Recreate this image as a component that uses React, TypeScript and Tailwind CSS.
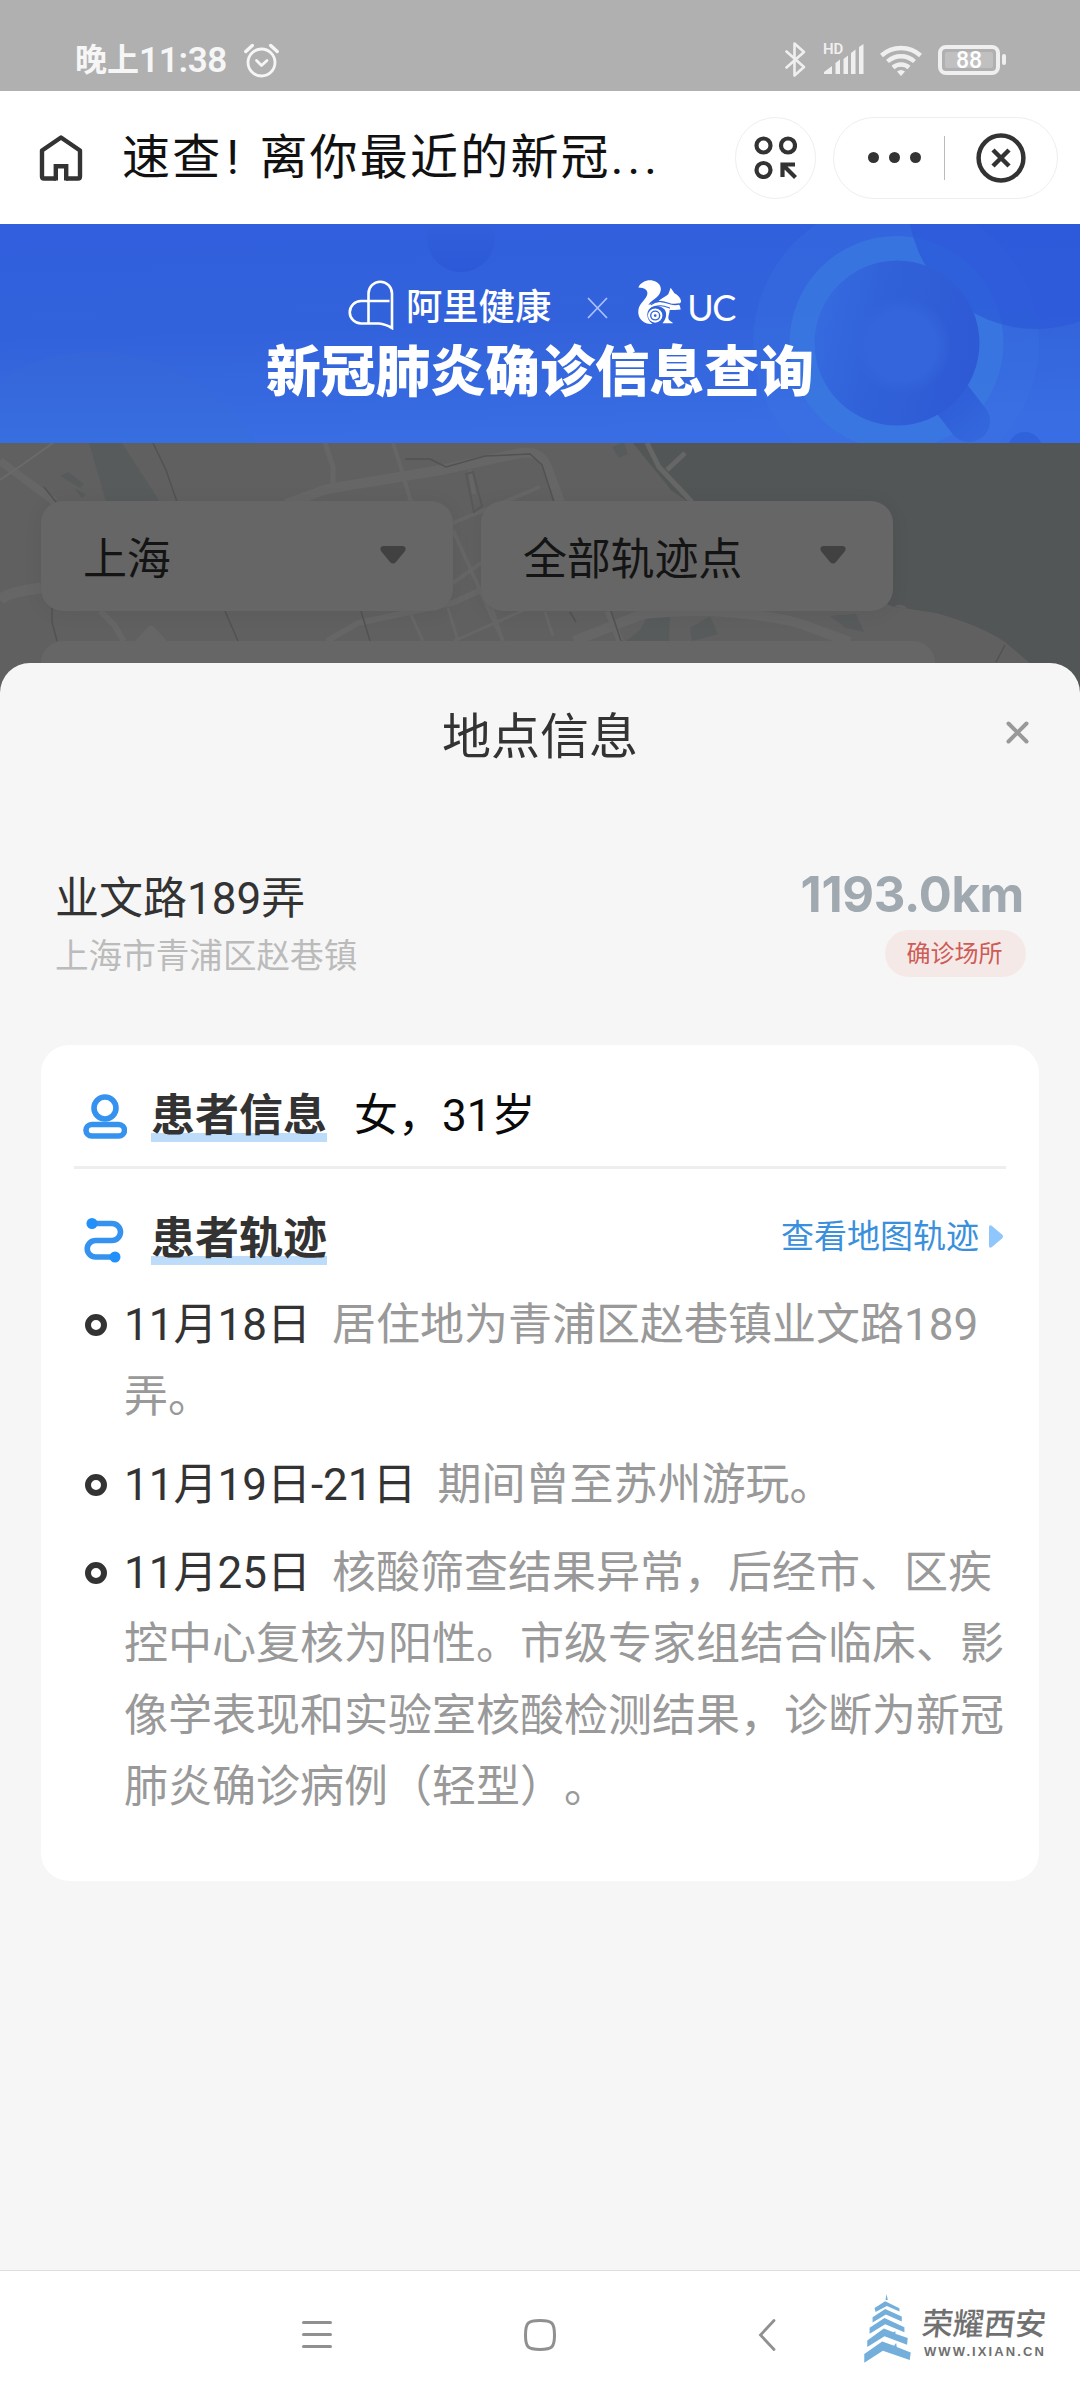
import React from "react";

interface TrackItem {
  date: string;
  detail: string;
}

const tracks: TrackItem[] = [
  { date: "11月18日", detail: "居住地为青浦区赵巷镇业文路189弄。" },
  { date: "11月19日-21日", detail: "期间曾至苏州游玩。" },
  {
    date: "11月25日",
    detail:
      "核酸筛查结果异常，后经市、区疾控中心复核为阳性。市级专家组结合临床、影像学表现和实验室核酸检测结果，诊断为新冠肺炎确诊病例（轻型）。",
  },
];

function StatusBar() {
  return (
    <header className="flex h-[91px] items-start justify-between bg-[#b0b0b0] pr-[80px] pl-[75px] pt-[42px] text-[#f6f6f6]">
      <div className="flex items-center">
        <span className="text-[32px] leading-[34px] font-bold whitespace-nowrap">晚上</span>
        <span className="w-[88px] pt-[2px] text-[35px] leading-[34px] font-semibold whitespace-nowrap tracking-[-0.300px]">11:38</span>
        <svg className="ml-[17px]" width="35" height="35" viewBox="0 0 35 35" fill="none" stroke="currentColor" strokeWidth="2.8" strokeLinecap="round" strokeLinejoin="round">
          <circle cx="17.5" cy="19.5" r="13.5" />
          <path d="M12.5 17.5l5 5 5.500-5" />
          <path d="M1.800 8.500l6.500-6M33.200 8.500l-6.500-6" strokeWidth="3.400" />
        </svg>
      </div>
      <div className="flex items-center text-[#efefef]">
        <svg width="21" height="35" viewBox="0 0 21 35" fill="none" stroke="currentColor" strokeWidth="2.6" strokeLinejoin="round" strokeLinecap="round">
          <path d="M1.500 9.500l17.500 15.500-9.500 8.500V1.500l9.500 8.500L1.500 25.500" />
        </svg>
        <div className="relative ml-[17px] h-[35px] w-[41px]">
          <span className="absolute top-0 left-0 text-[15px] leading-[14px] font-semibold">HD</span>
          <svg width="41" height="35" viewBox="0 0 41 35" fill="currentColor">
            <path d="M1 30l8-6v8H1zM12.500 21l4.500-3.500V32h-4.500zM20.500 17l4.500-3.500V32h-4.500zM28 11l4.500-3.500V32H28zM36 5l4.500-3V32H36z" />
          </svg>
        </div>
        <svg className="ml-[16px]" width="42" height="32" viewBox="0 0 42 32" fill="none" stroke="currentColor" strokeWidth="4.400">
          <path d="M1.500 11.500a29 29 0 0 1 39 0" />
          <path d="M7.500 17.500a20 20 0 0 1 27 0" />
          <path d="M13 23.500a12 12 0 0 1 16 0" />
          <path d="M17 27.500q4-3 8 0l-4 4.500z" fill="currentColor" stroke="none" />
        </svg>
        <div className="ml-[16px] flex h-[30px] w-[62px] items-center justify-center rounded-[8px] border-4 border-[#efefef] p-[3px]">
          <span className="h-full w-full rounded-[2px] bg-[#c0c0c0] text-center text-[23px] leading-[18px] font-medium text-white">88</span>
        </div>
        <span className="mr-[-6px] ml-[2px] h-[11px] w-[4px] rounded-sm bg-[#efefef]" />
      </div>
    </header>
  );
}

function TitleBar() {
  return (
    <div className="flex h-[133px] items-center bg-white pl-[39px] text-[#333]">
      <svg width="44" height="48" viewBox="0 0 44 48" fill="none" stroke="currentColor" strokeWidth="4.400" strokeLinejoin="round">
        <path d="M17 44.500H5Q3 44.500 3 42.500V16.500L22 3.500l19 13V42.500q0 2-2 2H27" />
        <path d="M16.800 46.500V32.200h10.400V46.500" strokeLinejoin="miter" />
      </svg>
      <h1 className="ml-[39px] flex w-[613px] text-[48px] leading-[60px] tracking-[2.200px] whitespace-nowrap text-[#111]">
        <span>速查</span>
        <span className="w-[37px] pl-[4px]">!</span>
        <span>离你最近的新冠</span>
        <span className="tracking-[4px]">...</span>
      </h1>
      <div className="flex h-[82px] w-[81px] items-center justify-center rounded-full border border-[#eee]">
        <svg width="43" height="43" viewBox="0 0 43 43" fill="none" stroke="currentColor" strokeWidth="4.200">
          <circle cx="9.500" cy="9.500" r="7" />
          <circle cx="34" cy="9.500" r="7" />
          <circle cx="9.500" cy="34" r="7" />
          <path d="M28.500 41V28.500H41M29 29l12.500 12.500" />
        </svg>
      </div>
      <div className="ml-[17px] flex h-[82px] w-[225px] items-center rounded-full border border-[#eee]">
        <div className="ml-[34px] flex gap-[10px]">
          <i className="h-[11px] w-[11px] rounded-full bg-[#333]" />
          <i className="h-[11px] w-[11px] rounded-full bg-[#333]" />
          <i className="h-[11px] w-[11px] rounded-full bg-[#333]" />
        </div>
        <span className="ml-[23px] h-[44px] w-px bg-[#bbb]" />
        <svg className="ml-[31px]" width="50" height="50" viewBox="0 0 50 50" fill="none" stroke="currentColor" strokeWidth="4.500">
          <circle cx="25" cy="25" r="22.400" />
          <path d="M17 17l16 16M33 17L17 33" />
        </svg>
      </div>
    </div>
  );
}

function BannerArt() {
  return (
    <svg className="absolute inset-0" width="1080" height="219" viewBox="0 224 1080 219">
      <defs>
        <linearGradient id="sea" x1="0" y1="0" x2="0.150" y2="1">
          <stop offset="0" stopColor="#315fde" />
          <stop offset="0.500" stopColor="#3262db" />
          <stop offset="1" stopColor="#386de3" />
        </linearGradient>
        <linearGradient id="lens" x1="0" y1="0.300" x2="1" y2="0.500">
          <stop offset="0" stopColor="#366be0" />
          <stop offset="0.350" stopColor="#3162d9" />
          <stop offset="1" stopColor="#2e5ad5" />
        </linearGradient>
        <radialGradient id="glass">
          <stop offset="0.700" stopColor="#3465dc" />
          <stop offset="1" stopColor="#3465dc" stopOpacity="0" />
        </radialGradient>
        <linearGradient id="hill" x1="0" y1="0" x2="0" y2="1">
          <stop offset="0" stopColor="#3565d9" />
          <stop offset="0.250" stopColor="#376fe0" />
        </linearGradient>
        <linearGradient id="drop" x1="0" y1="0" x2="0" y2="1">
          <stop offset="0" stopColor="#3463de" />
          <stop offset="1" stopColor="#2c59d7" />
        </linearGradient>
        <linearGradient id="handle" gradientUnits="userSpaceOnUse" x1="940" y1="385" x2="985" y2="440">
          <stop offset="0" stopColor="#2e5bd6" />
          <stop offset="1" stopColor="#3468de" />
        </linearGradient>
      </defs>
      <rect y="224" width="1080" height="219" fill="url(#sea)" />
      <circle cx="95" cy="542" r="190" fill="url(#hill)" />
      <circle cx="461" cy="238" r="34" fill="url(#drop)" />
      <circle cx="896" cy="343" r="143" fill="#3a78e2" opacity="0.250" />
      <circle cx="896.500" cy="343" r="107" fill="#3a78e0" opacity="0.800" />
      <circle cx="1036" cy="201" r="128" fill="#2c59d8" opacity="0.700" />
      <path d="M945 390l24 31" stroke="url(#handle)" strokeWidth="42" strokeLinecap="round" />
      <circle cx="897" cy="343" r="82.500" fill="url(#lens)" />
      <circle cx="902" cy="346" r="49" fill="url(#glass)" />
      <circle cx="1025" cy="449" r="17" fill="#3063db" />
    </svg>
  );
}

function SquirrelLogo() {
  return (
    <svg width="43" height="44" viewBox="285 181 125 130" preserveAspectRatio="none" fill="#fff">
      <path d="M286 203C293 187 312 179 329 183C350 188 357 206 347 223C339 236 321 243 315 255C345 240 362 246 380 250C392 253 400 252 406 250C396 240 382 237 366 237L350 239C357 232 366 230 373 223L380 204L391 220C403 226 411 236 410 247L402 251L407 258L409 268C397 269 386 270 377 270C377 281 371 290 374 297C377 303 384 304 387 309H356C367 297 370 281 363 269C352 255 329 254 319 266C307 279 311 299 327 311C307 312 288 301 286 280C284 256 299 247 308 233C317 218 313 204 286 203Z" />
      <path d="M345 242C365 228 392 232 408 250L385 252Z" />
      <path d="M322 254C345 238 362 246 380 252Q394 255 405 252" fill="none" stroke="#3262db" strokeWidth="3.500" />
      <path d="M325 264C345 252 360 258 378 264" fill="none" stroke="#3262db" strokeWidth="3.500" />
      <circle cx="335" cy="286" r="18" fill="none" stroke="#fff" strokeWidth="6" />
      <circle cx="335" cy="286" r="7.500" fill="none" stroke="#fff" strokeWidth="7" />
    </svg>
  );
}

function Banner() {
  return (
    <section className="relative h-[219px] overflow-hidden bg-[#3262db] text-white">
      <BannerArt />
      <div className="relative flex h-[110px] items-start pt-[56px] pl-[348px]">
        <svg width="46" height="50" viewBox="0 0 46 50" fill="none" stroke="#fff" strokeWidth="2.600">
          <path d="M20.500 43V13.500a11.750 11.750 0 0 1 23.500 0V48q-7-4-13-4.500H13A11.250 11.250 0 0 1 13 21H41.500" />
        </svg>
        <span className="mt-[9px] ml-[12px] text-[36.300px] leading-[38px] font-medium whitespace-nowrap">阿里健康</span>
        <svg className="mt-[17px] ml-[36px]" width="21" height="22" viewBox="0 0 21 22" stroke="#a9c0ff" strokeWidth="1.800">
          <path d="M1 1l19 20M20 1L1 21" />
        </svg>
        <div className="ml-[30px]">
          <SquirrelLogo />
        </div>
        <span className="mt-[8px] ml-[6px] [font-family:Lato,sans-serif] text-[36px] leading-[38px] tracking-[-1.500px]">UC</span>
      </div>
      <h2 className="relative pt-[3px] pl-[266px] text-[54.800px] leading-[70px] font-black whitespace-nowrap">新冠肺炎确诊信息查询</h2>
    </section>
  );
}

// Dimmed street map behind the filters
function MapBackdrop() {
  return (
    <svg className="absolute inset-0" width="1080" height="270" viewBox="0 443 1080 270" fill="none">
      <rect y="443" width="1080" height="270" fill="#606060" />
      <path d="M633 443L671 490L688 502L780 560L894 607L936 613Q980 625 1005 642L1038 670V713H1080V443Z" fill="#525656" />
      <path d="M894 607Q900 600 912 612L936 613" fill="#606060" />
      <path d="M89 443H122L160 502H106Z" fill="#585b5b" />
      <path d="M60 476l8-4 16 12-4 4zM74 488l12 6-4 4z" fill="#585b5b" />
      <path d="M650 613H670L669 641H626L640 630ZM690 628l20-12 8 18-26 7zM830 616l26-2 8 18-18-4z" fill="#585b5b" />
      <path d="M612 447l12-5 4 12-9 4z" fill="#585b5b" />
      <g stroke="#666">
        <path d="M0 461L55 502" strokeWidth="8" />
        <path d="M325 443L333 467V490" strokeWidth="5" />
        <path d="M286 504L327 489L441 470L520 453Q540 450 547 467L560 502" strokeWidth="10" />
        <path d="M393 443L401 468L411 502" strokeWidth="4" />
        <path d="M453 523L540 487M453 530L503 641M453 583L520 535M470 470L474 494" strokeWidth="4" />
        <path d="M0 600Q8 592 41 588" strokeWidth="11" />
        <path d="M100 611L114 625L124 641" strokeWidth="6" />
        <path d="M327 641L358 623L453 603L481 590" strokeWidth="6" />
        <path d="M411 615L423 641M448 608L458 641M492 608L503 641M454 641L540 603M545 612L553 636" strokeWidth="3" />
        <path d="M574 641L643 614Q700 608 747 614T809 627L850 642" strokeWidth="10" />
        <path d="M608 611L620 641" strokeWidth="7" />
        <path d="M647 443L659 467L692 502M685 453L667 470" strokeWidth="5" />
      </g>
      <path d="M53 443L22 465L0 480" stroke="#686b6b" strokeWidth="2" />
      <g stroke="#505353" strokeWidth="1.500">
        <path d="M153 443L166 470L177 502M44 487L56 502" />
        <path d="M405 459H430L446 467L485 456L530 454L542 465L554 502" />
        <path d="M52 608V622L57 641M225 611L238 641M361 611L370 641M611 611L621 641" />
        <path d="M570 612L576 622" />
        <path d="M1005 645L996 662" />
      </g>
      <path d="M466 474l7-2 9 34-8 6z" stroke="#575959" strokeWidth="2" />
    </svg>
  );
}

function FilterSelect({ label }: { label: string }) {
  return (
    <div className="flex h-[110px] w-[412px] items-center justify-between rounded-[22px] bg-[#666] pr-[47px] pl-[42px] shadow-[0_2px_20px_rgba(0,0,0,0.060)]">
      <span className="pt-[8px] text-[44px] leading-[60px] tracking-[-0.200px] text-[#141414]">{label}</span>
      <svg className="mb-[2px]" width="26" height="18" viewBox="0 0 26 18" fill="#414141">
        <path d="M3 0H23Q27 1 25 5L16 16Q13 19 10 16L1 5Q-1 1 3 0Z" />
      </svg>
    </div>
  );
}

function MapFilters() {
  return (
    <section className="relative h-[264px] overflow-hidden">
      <MapBackdrop />
      <div className="relative flex gap-[28px] pt-[58px] pl-[41px]">
        <FilterSelect label="上海" />
        <FilterSelect label="全部轨迹点" />
      </div>
      <div className="relative mt-[30px] ml-[41px] h-[80px] w-[894px] rounded-[22px] bg-[#666]">
        <svg className="absolute top-[-16px] left-[93px]" width="34" height="17" viewBox="0 0 34 17" fill="#666">
          <path d="M0 17L14 2q3-3 6 0L34 17z" />
        </svg>
      </div>
    </section>
  );
}

function SectionTitle({ children }: { children: React.ReactNode }) {
  return (
    <h3 className="h-[53px] bg-[linear-gradient(#bcdcf9,#bcdcf9)] bg-[length:100%_9px] bg-bottom bg-no-repeat pt-[2px] text-[44px] leading-[50px] font-bold whitespace-nowrap text-[#333]">
      {children}
    </h3>
  );
}

function PatientCard() {
  return (
    <section className="mx-[41px] h-[836px] rounded-[28px] bg-white">
      <div className="mx-[33px] flex h-[124px] items-start border-b-[3px] border-[#eee] pt-[44px] pl-[9px]">
        <svg className="mt-[5px]" width="44" height="45" viewBox="0 0 44 45" fill="none" stroke="#3592ee" strokeWidth="5.600">
          <circle cx="22" cy="14" r="11" />
          <rect x="3" y="30.500" width="38.500" height="11.500" rx="5.750" />
        </svg>
        <div className="ml-[24px]">
          <SectionTitle>患者信息</SectionTitle>
        </div>
        <span className="ml-[27px] pt-[2px] text-[44px] leading-[50px] text-[#0a0a0a]">女，31岁</span>
      </div>

      <div className="mx-[33px] flex items-start pt-[43px] pl-[10px]">
        <svg className="mt-[5px]" width="40" height="46" viewBox="0 0 40 46" fill="none" stroke="#3592ee" strokeWidth="5.600">
          <path d="M9 6.500H28A8.500 8.500 0 0 1 28 23.500H11.500A8.250 8.250 0 0 0 11.500 40H32" />
          <circle cx="8" cy="6.500" r="5.500" fill="#2190fa" stroke="none" />
          <circle cx="31" cy="40" r="5.500" fill="#2190fa" stroke="none" />
        </svg>
        <div className="ml-[27px]">
          <SectionTitle>患者轨迹</SectionTitle>
        </div>
        <a className="ml-auto flex items-center pr-[3px] text-[33px] leading-[50px] text-[#3a90dc]">
          查看地图轨迹
          <svg className="mb-[2px] ml-[10px]" width="14" height="23" viewBox="0 0 14 23" fill="#8fc6fc">
            <path d="M0 2.500Q0-1 3 1L13 9.500Q15 11.500 13 13.500L3 22Q0 24 0 20.500Z" />
          </svg>
        </a>
      </div>

      <ul className="mt-[25px] flex flex-col gap-[16.500px] pl-[44px]">
        {tracks.map((item) => (
          <li key={item.date} className="flex items-start">
            <i className="mt-[24px] h-[22px] w-[22px] shrink-0 rounded-full border-[6px] border-[#333]" />
            <p className="ml-[17px] w-[884px] text-[44px] leading-[71.500px] text-[#999]">
              <span className="mr-[21px] text-[#333]">{item.date}</span>
              {item.detail}
            </p>
          </li>
        ))}
      </ul>
    </section>
  );
}

function LocationSheet() {
  return (
    <main className="relative mt-[-44px] h-[1607px] rounded-t-[30px] bg-[#f6f6f6]">
      <div className="flex h-[146px] items-center justify-center">
        <h2 className="ml-[74px] flex-1 pt-[3px] text-center text-[49px] leading-[60px] text-[#333]">地点信息</h2>
        <svg className="mr-[51px] mb-[8px]" width="23" height="23" viewBox="0 0 23 23" stroke="#999" strokeWidth="4" strokeLinecap="round">
          <path d="M2.500 2.500l18 18M20.500 2.500l-18 18" />
        </svg>
      </div>

      <div className="flex h-[236px] justify-between pt-[58px] pr-[54px] pl-[55px]">
        <div>
          <div className="pt-[2px] text-[44px] leading-[60px] text-[#333]">业文路189弄</div>
          <div className="text-[33.600px] leading-[56px] text-[#bbb]">上海市青浦区赵巷镇</div>
        </div>
        <div className="flex flex-col items-end">
          <div className="pt-px pr-[2px] [font-family:Inter,sans-serif] text-[49px] leading-[54px] font-bold tracking-[-0.300px] text-[#a0a9b0]">1193.0km</div>
          <div className="mt-[8px] flex h-[47px] w-[141px] items-center justify-center rounded-full bg-[#f5e9e8] pr-[2px] pt-px text-[24px] text-[#cd5c57]">
            确诊场所
          </div>
        </div>
      </div>

      <PatientCard />
    </main>
  );
}

function SystemNav() {
  return (
    <footer className="flex h-[130px] items-start border-t border-[#dedede] bg-white text-[#909090]">
      <svg className="mt-[50px] ml-[302px]" width="30" height="27" viewBox="0 0 30 27" stroke="currentColor" strokeWidth="3" strokeLinecap="round">
        <path d="M1.500 1.500h27M1.500 13.500h27M1.500 25.500h27" />
      </svg>
      <svg className="mt-[48px] ml-[192px]" width="32" height="32" viewBox="0 0 32 32" fill="none" stroke="currentColor" strokeWidth="3">
        <path d="M16 1.500C28 1.500 30.500 3.500 30.500 16S28 30.500 16 30.500 1.500 28.500 1.500 16 4 1.500 16 1.500Z" />
      </svg>
      <svg className="mt-[48px] ml-[202px]" width="18" height="32" viewBox="0 0 18 32" fill="none" stroke="currentColor" strokeWidth="2.800" strokeLinecap="round">
        <path d="M16 1.500L2.500 16L16 30.500" />
      </svg>
      <svg className="mt-[23px] ml-[88px]" width="47" height="69" viewBox="672 162 140 208" fill="#74aedb">
        <path d="M739 162L743 180H736ZM703 204L735 184L778 205V215L740 198L706 216Z" />
        <path d="M697 232L735 207L750 214L785 230V245L737 224L697 248Z" />
        <path d="M688 264L733 234L793 262V277L735 253L688 282Z" />
        <path d="M681 302L731 266L760 277L766 274V282L803 295L801 315L733 289L681 322Z" />
        <path d="M672 343L726 305L762 318L768 310L770 322L812 338L809 361L728 333L672 369Z" />
      </svg>
      <div className="mt-[35px] ml-[11px] w-[130px] text-[#707070]">
        <div className="-skew-x-6 text-[31px] leading-[38px] font-medium whitespace-nowrap">荣耀西安</div>
        <div className="mt-px pl-[2px] [font-family:'Liberation_Sans',sans-serif] text-[13px] leading-[14px] font-bold tracking-[2.100px] whitespace-nowrap">WWW.IXIAN.CN</div>
      </div>
    </footer>
  );
}

export default function App() {
  return (
    <div
      lang="zh-CN"
      className="flex h-[2400px] w-[1080px] flex-col overflow-hidden bg-white [font-family:Roboto,'Noto_Sans_CJK_SC',sans-serif] [text-spacing-trim:space-all]"
    >
      <StatusBar />
      <TitleBar />
      <Banner />
      <MapFilters />
      <LocationSheet />
      <SystemNav />
    </div>
  );
}
